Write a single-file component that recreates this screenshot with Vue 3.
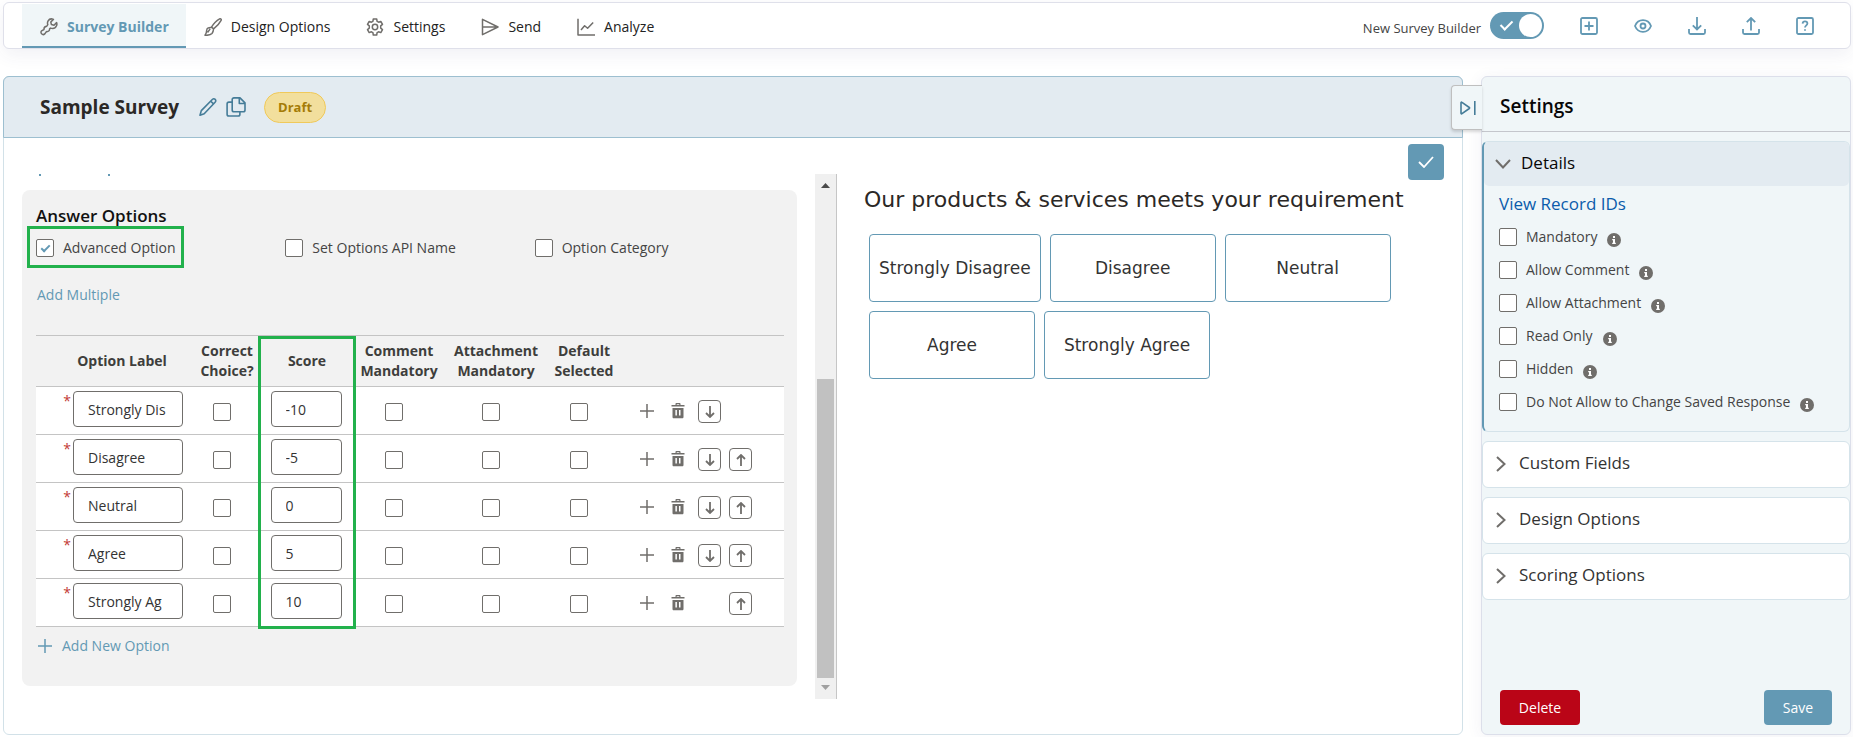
<script setup>
import { reactive, ref } from 'vue'

const tabs = ['Survey Builder', 'Design Options', 'Settings', 'Send', 'Analyze']
const tools = ['Add', 'Preview', 'Download', 'Upload', 'Help']
const newBuilder = ref(true)

const flags = reactive([
  { id: 'advanced', label: 'Advanced Option', on: true },
  { id: 'api-name', label: 'Set Options API Name', on: false },
  { id: 'category', label: 'Option Category', on: false },
])

const options = reactive([
  { label: 'Strongly Dis', score: '-10' },
  { label: 'Disagree', score: '-5' },
  { label: 'Neutral', score: '0' },
  { label: 'Agree', score: '5' },
  { label: 'Strongly Ag', score: '10' },
])

const choices = ['Strongly Disagree', 'Disagree', 'Neutral', 'Agree', 'Strongly Agree']
const details = ['Mandatory', 'Allow Comment', 'Allow Attachment', 'Read Only', 'Hidden', 'Do Not Allow to Change Saved Response']
const sections = ['Custom Fields', 'Design Options', 'Scoring Options']
</script>

<template>
  <div class="page">
    <header class="topbar">
      <nav class="tabs">
        <a v-for="(t, i) in tabs" :key="t" href="#" class="tab" :class="{ active: i === 0 }">
          <svg v-if="i === 0" class="ico" viewBox="0 0 18 18"><path d="M16.6 4.6 14 7.2l-2.6-.6-.6-2.6 2.6-2.6c-2-.9-4.3-.2-5.300 1.500-.7 1.200-.8 2.500-.3 3.800L6.800 8.200c-2 .2-3 1.200-2.800 3.300L1.600 12.800a2.100 2.100 0 0 0 0 3 2.300 2.300 0 0 0 3.200.1l1.600-2.300c2 .2 3.200-.8 3.200-2.700l.9-.8c2.500.9 5-.200 6-2.300.5-1 .5-2.200.1-3.200Z" /></svg>
          <svg v-else-if="i === 1" class="ico" viewBox="0 0 18 18"><path d="M7.500 9.200C9.800 5.300 12.600 2.500 15.600.900c1-.5 2 .4 1.500 1.500-1.500 3-4 5.800-7.500 8.400M7.500 9.200l2.100 1.600M7.500 9.200 4.200 9.900c-1 .4-1.400 1.200-1.500 2.300-.1 2-.6 3.600-1.700 5 2.500.2 5.600-.1 7-1.600 1-1.200 1.400-2.700 1.600-4.800M6.200 10.900l-2.700 3.600" /></svg>
          <svg v-else-if="i === 2" class="ico" viewBox="0 0 18 18"><path d="m7.300 1-.4 2.300-1.500.9-2.200-.8-1.700 3 1.800 1.500v2.200l-1.800 1.500 1.700 3 2.200-.8 1.500.9.400 2.300h3.400l.4-2.300 1.500-.9 2.200.8 1.700-3-1.800-1.500V7.900l1.800-1.500-1.700-3-2.200.8-1.500-.9-.4-2.300Z" /><circle cx="9" cy="9" r="2.700" /></svg>
          <svg v-else-if="i === 3" class="ico" viewBox="0 0 18 18"><path d="M1.500 1.300 17 9 1.500 16.700V1.300ZM1.500 9H16.500" /></svg>
          <svg v-else class="ico" viewBox="0 0 18 18"><path d="M1 .800v16.200h17M4 12l3.600-4.300 3 2.600 5.600-5.800" /></svg>
          <span>{{ t }}</span>
        </a>
      </nav>
      <div class="tools">
        <label class="switch">
          <span>New Survey Builder</span>
          <input v-model="newBuilder" type="checkbox" role="switch" />
        </label>
        <button v-for="(t, i) in tools" :key="t" type="button" class="tool" :aria-label="t">
          <svg v-if="i === 0" viewBox="0 0 18 18"><rect x="1" y="1" width="16" height="16" rx="1.500" /><path d="M9 4.500v9M4.500 9h9" /></svg>
          <svg v-else-if="i === 1" viewBox="0 0 18 18"><path d="M1 9c1.500-3.800 4.500-5.800 8-5.800S15.500 5.200 17 9c-1.500 3.800-4.500 5.800-8 5.800S2.500 12.800 1 9Z" /><circle cx="9" cy="9" r="2.500" /></svg>
          <svg v-else-if="i === 2" viewBox="0 0 18 18"><path d="M9 0v12.500M4.800 8.300 9 12.500l4.200-4.200M1 12v3.500c0 .8.700 1.500 1.500 1.500h13c.8 0 1.500-.7 1.500-1.500V12" /></svg>
          <svg v-else-if="i === 3" viewBox="0 0 18 18"><path d="M9 13.500V1M4.800 5.200 9 1l4.200 4.200M1 12v3.500c0 .8.700 1.500 1.500 1.500h13c.8 0 1.500-.7 1.500-1.500V12" /></svg>
          <svg v-else viewBox="0 0 18 18"><rect x="1" y="1" width="16" height="16" rx="1.500" /><path d="M6.600 6.600c.1-1.400 1.100-2.200 2.400-2.200s2.400.9 2.400 2.200c0 1.700-2.400 1.900-2.400 4M9 12.300v1.500" /></svg>
        </button>
      </div>
    </header>

    <div class="columns">
      <main class="main">
        <div class="survey-head">
          <h1>Sample Survey</h1>
          <button type="button" class="plain" aria-label="Rename survey">
            <svg class="ico-head" viewBox="0 0 20 20"><path d="M2 18.200 3.300 13.600 14.300 2.500c.9-.9 2.100-.9 2.900-.1s.8 2-.1 2.900L6.200 16.700ZM12.800 4.200l2.700 2.700" /></svg>
          </button>
          <button type="button" class="plain" aria-label="Copy survey">
            <svg class="ico-head" viewBox="0 0 20 20"><path d="M8 .900h6l5 5v7c0 1-.8 1.800-1.800 1.800H8c-1 0-1.800-.8-1.800-1.800V2.700C6.200 1.700 7 .900 8 .900ZM13.300 1v5.500H19M6 5.100H2.900c-1 0-1.800.8-1.800 1.800v10.300c0 1 .8 1.800 1.800 1.800h9.200c1 0 1.800-.8 1.800-1.800v-2.400" /></svg>
          </button>
          <span class="badge">Draft</span>
        </div>

        <div class="body">
          <div class="editor">
            <div class="scroll-content">
              <div class="ticks" aria-hidden="true"><i></i><i></i></div>
              <section class="card">
                <h2>Answer Options</h2>
                <div class="flags">
                  <div v-for="(f, i) in flags" :key="f.id" class="flag">
                    <label class="check" :class="{ marked: i === 0 }">
                      <input v-model="f.on" type="checkbox" class="box" />
                      <span>{{ f.label }}</span>
                    </label>
                  </div>
                </div>
                <a href="#" class="add-multiple">Add Multiple</a>

                <div class="table-wrap">
                  <table>
                    <colgroup>
                      <col class="c-label" /><col class="c-correct" /><col class="c-score" /><col class="c-comment" /><col class="c-attach" /><col class="c-default" /><col />
                    </colgroup>
                    <thead>
                      <tr>
                        <th class="first">Option Label</th>
                        <th>Correct<br />Choice?</th>
                        <th>Score</th>
                        <th>Comment<br />Mandatory</th>
                        <th>Attachment<br />Mandatory</th>
                        <th>Default<br />Selected</th>
                        <th></th>
                      </tr>
                    </thead>
                    <tbody>
                      <tr v-for="(o, i) in options" :key="i">
                        <td>
                          <div class="label-cell">
                            <span class="star">*</span>
                            <input v-model="o.label" type="text" class="field" aria-label="Option Label" />
                          </div>
                        </td>
                        <td class="tick"><input type="checkbox" class="box" aria-label="Correct Choice?" /></td>
                        <td><div class="score-cell"><input v-model="o.score" type="text" class="field" aria-label="Score" /></div></td>
                        <td class="tick"><input type="checkbox" class="box" aria-label="Comment Mandatory" /></td>
                        <td class="tick"><input type="checkbox" class="box" aria-label="Attachment Mandatory" /></td>
                        <td class="tick"><input type="checkbox" class="box" aria-label="Default Selected" /></td>
                        <td>
                          <div class="actions">
                            <button type="button" class="act" aria-label="Add option"><svg viewBox="0 0 14 14"><path d="M7 0v14M0 7h14" fill="none" stroke="currentColor" stroke-width="1.500" /></svg></button>
                            <button type="button" class="act" aria-label="Delete option"><svg viewBox="0 0 14 16"><path fill="currentColor" fill-rule="evenodd" d="M4.500 2V1c0-.6.400-1 1-1h3c.6 0 1 .4 1 1v1h4v1.600H.500V2ZM5.700 2h2.600v-.8H5.700ZM1.500 5h11v9c0 .8-.5 1.300-1.300 1.300H2.800c-.8 0-1.300-.5-1.300-1.300Zm2.900 2v5.500h1.500V7Zm3.600 0v5.500h1.500V7Z" /></svg></button>
                            <button type="button" class="move" :class="{ gone: i === options.length - 1 }" aria-label="Move down"><svg viewBox="0 0 10 12"><path d="M5 0v11M1 7l4 4 4-4" /></svg></button>
                            <button type="button" class="move" :class="{ gone: i === 0 }" aria-label="Move up"><svg viewBox="0 0 10 12"><path d="M5 12V1M1 5l4-4 4 4" /></svg></button>
                          </div>
                        </td>
                      </tr>
                    </tbody>
                  </table>
                  <div class="score-mark" aria-hidden="true"></div>
                </div>

                <a href="#" class="add-new">
                  <svg viewBox="0 0 14 14"><path d="M7 0v14M0 7h14" /></svg>
                  <span>Add New Option</span>
                </a>
              </section>
            </div>
            <div class="scrollbar" aria-hidden="true">
              <svg class="arrow up" viewBox="0 0 9 5"><path d="M4.500 0 9 5H0Z" /></svg>
              <div class="track"><div class="thumb"></div></div>
              <svg class="arrow down" viewBox="0 0 9 5"><path d="M0 0h9L4.500 5Z" /></svg>
            </div>
          </div>

          <div class="preview">
            <button type="button" class="confirm" aria-label="Confirm">
              <svg viewBox="0 0 16 12"><path d="m1 6 5 5L15 1" /></svg>
            </button>
            <h2>Our products &amp; services meets your requirement</h2>
            <div class="choices">
              <button v-for="c in choices" :key="c" type="button">{{ c }}</button>
            </div>
          </div>
        </div>
      </main>

      <aside class="side">
        <button type="button" class="collapse" aria-label="Collapse settings">
          <svg viewBox="0 0 16 14"><path d="M1 1.800v10.400c0 .5.600.8 1 .5l7.300-5.200c.4-.3.4-.7 0-1L2 1.300c-.4-.3-1 0-1 .5ZM14.800 0v14" /></svg>
        </button>
        <h2>Settings</h2>
        <section class="details">
          <button type="button" class="details-head">
            <svg viewBox="0 0 16 10"><path d="m1 1 7 7.500L15 1" /></svg>
            <span>Details</span>
          </button>
          <div class="details-body">
            <a href="#">View Record IDs</a>
            <div v-for="d in details" :key="d" class="detail">
              <label class="check"><input type="checkbox" class="box" /><span>{{ d }}</span></label>
              <svg class="info" viewBox="0 0 14 14"><circle cx="7" cy="7" r="7" /><path d="M6 3h2v2H6ZM5.200 6H8v3.700h.8v1.200H5.200V9.700H6V7.200h-.8Z" /></svg>
            </div>
          </div>
        </section>
        <button v-for="s in sections" :key="s" type="button" class="section">
          <svg viewBox="0 0 10 16"><path d="m1 1 7.500 7L1 15" /></svg>
          <span>{{ s }}</span>
        </button>
        <div class="footer">
          <button type="button" class="delete">Delete</button>
          <button type="button" class="save">Save</button>
        </div>
      </aside>
    </div>
  </div>
</template>

<style>
body {
  margin: 0;
  background: #fff;
}
</style>

<style scoped>
.page {
  box-sizing: border-box;
  min-height: 100vh;
  padding: 2px 2px 2px 3px;
  display: flex;
  flex-direction: column;
  gap: 27px;
  font-family: "Open Sans", "Noto Sans", sans-serif;
  font-size: 14px;
  line-height: 20px;
  color: #222;
}
.page *,
.page *::before,
.page *::after {
  box-sizing: border-box;
}
button,
input {
  font: inherit;
  color: inherit;
  margin: 0;
}
button {
  padding: 0;
  border: 0;
  background: none;
  cursor: pointer;
}
a {
  color: #6399b4;
  text-decoration: none;
}
h1,
h2 {
  margin: 0;
}
svg {
  display: block;
  flex: none;
}

/* Top bar */
.topbar {
  display: flex;
  justify-content: space-between;
  height: 47px;
  padding-left: 18px;
  padding-right: 36px;
  border: 1px solid #dfe0ea;
  border-radius: 6px;
  background: #fff;
  box-shadow: 0 6px 18px rgba(60, 60, 110, 0.07);
}
.tabs {
  display: flex;
  padding-top: 1px;
}
.tab {
  display: flex;
  align-items: center;
  gap: 9px;
  height: 44px;
  padding: 3px 18px 0;
  color: #222;
  border-bottom: 2px solid transparent;
}
.tab.active {
  padding-right: 17px;
  color: #6399b4;
  font-weight: 700;
  background: #f0f6f8;
  border-color: #6399b4;
}
.ico {
  width: 18px;
  height: 18px;
  fill: none;
  stroke: #706e6b;
  stroke-width: 1.5;
  stroke-linejoin: round;
}
.tools {
  display: flex;
  align-items: center;
  gap: 36px;
}
.switch {
  display: flex;
  align-items: center;
  gap: 9px;
  color: #444;
  font-size: 13px;
}
.switch span {
  padding-top: 4px;
}
.switch input {
  appearance: none;
  position: relative;
  width: 54px;
  height: 27px;
  border-radius: 14px;
  background: #6399b4;
}
.switch input::before {
  content: "";
  position: absolute;
  right: 2px;
  top: 2px;
  width: 23px;
  height: 23px;
  border-radius: 50%;
  background: #fff;
}
.switch input::after {
  content: "";
  position: absolute;
  left: 13px;
  top: 6px;
  width: 7px;
  height: 12px;
  border: solid #fff;
  border-width: 0 2px 2px 0;
  transform: rotate(45deg);
}
.tool svg {
  width: 18px;
  height: 18px;
  fill: none;
  stroke: #6399b4;
  stroke-width: 1.8;
}

/* Columns */
.columns {
  flex: 1;
  display: grid;
  grid-template-columns: minmax(0, 1fr) 370px;
  gap: 18px;
}
.main {
  display: flex;
  flex-direction: column;
  border: 1px solid #d2e1e8;
  border-radius: 6px;
}
.survey-head {
  display: flex;
  align-items: center;
  height: 62px;
  margin: -1px -1px 0;
  padding-left: 36px;
  background: #e3ebf1;
  border: 1px solid #9dbfd0;
  border-radius: 6px 6px 0 0;
}
.survey-head h1 {
  font-size: 19px;
  font-weight: 700;
  line-height: 28px;
  margin-right: 19px;
  color: #2b2826;
}
.plain {
  margin-right: 8px;
}
.ico-head {
  width: 20px;
  height: 20px;
  fill: none;
  stroke: #457c98;
  stroke-width: 1.6;
  stroke-linejoin: round;
}
.badge {
  margin-left: 10px;
  padding: 4px 13px 5px;
  border: 1px solid #f0c95a;
  border-radius: 16px;
  background: #f2df9d;
  color: #a57c07;
  font-size: 13px;
  font-weight: 700;
}
.body {
  flex: 1;
  display: grid;
  grid-template-columns: 833fr 625fr;
  align-items: start;
}

/* Editor */
.editor {
  display: flex;
  margin-top: 36px;
  padding-left: 18px;
  border-right: 1px solid #c6c6c6;
}
.scroll-content {
  flex: 1;
  padding-bottom: 13px;
  margin-right: 18px;
}
.ticks {
  display: flex;
  gap: 67px;
  height: 16px;
  padding-left: 17px;
}
.ticks i {
  width: 2px;
  height: 2px;
  background: #6399b4;
}
.card {
  padding: 14px 13px 28px 14px;
  border-radius: 8px;
  background: #f2f2f2;
}
.card h2 {
  font-size: 17px;
  font-weight: 600;
  line-height: 24px;
  color: #111;
}
.flags {
  display: grid;
  grid-template-columns: repeat(3, 1fr);
  margin-top: 10px;
}
.check {
  position: relative;
  display: inline-flex;
  align-items: center;
  gap: 9px;
  color: #444;
}
.marked::after {
  content: "";
  position: absolute;
  inset: -12px -8px -10px -9px;
  border: 3px solid #22b14c;
}
.box {
  appearance: none;
  position: relative;
  flex: none;
  width: 18px;
  height: 18px;
  border: 1px solid #706e6b;
  border-radius: 2px;
  background: #fff;
}
.box:checked::after {
  content: "";
  position: absolute;
  left: 6px;
  top: 3px;
  width: 5px;
  height: 9px;
  border: solid #6399b4;
  border-width: 0 2px 2px 0;
  transform: rotate(45deg);
}
.add-multiple {
  display: block;
  width: max-content;
  margin: 21px 0 28px;
  padding-left: 1px;
  line-height: 24px;
}
.table-wrap {
  position: relative;
}
table {
  width: 100%;
  table-layout: fixed;
  border-collapse: separate;
  border-spacing: 0;
  border-top: 1px solid #c4c4c4;
}
.c-label {
  width: 162px;
}
.c-correct {
  width: 58px;
}
.c-score {
  width: 102px;
}
.c-comment {
  width: 82px;
}
.c-attach {
  width: 112px;
}
.c-default {
  width: 64px;
}
th {
  height: 51px;
  padding: 0;
  font-weight: 700;
  color: #3e3e3c;
  border-bottom: 1px solid #c4c4c4;
  white-space: nowrap;
}
th.first {
  padding-left: 10px;
}
td {
  height: 48px;
  padding: 0;
  background: #fff;
  border-bottom: 1px solid #c4c4c4;
}
.label-cell {
  display: flex;
  width: 147px;
  padding-bottom: 3px;
}
.star {
  width: 37px;
  padding-right: 2px;
  text-align: right;
  color: #c23934;
}
.field {
  width: 110px;
  height: 36px;
  padding: 0 14px;
  border: 1px solid #706e6b;
  border-radius: 4px;
  background: #fff;
  color: #333;
}
.score-cell {
  display: flex;
  justify-content: center;
  padding: 0 2px 3px 0;
}
.score-cell .field {
  width: 71px;
}
.tick {
  text-align: center;
  padding: 1px 10px 0 0;
}
.tick .box {
  display: inline-block;
  vertical-align: middle;
}
.actions {
  display: flex;
  align-items: center;
  padding-left: 24px;
  padding-top: 1px;
}
.act {
  width: 14px;
  margin-right: 17px;
  color: #706e6b;
}
.move {
  display: flex;
  align-items: center;
  justify-content: center;
  width: 23px;
  height: 23px;
  margin: 0 8px 0 -4px;
  padding-top: 2px;
  border: 1px solid #706e6b;
  border-radius: 4px;
}
.move + .move {
  margin-left: 0;
}
.move svg {
  width: 10px;
  height: 12px;
  fill: none;
  stroke: #706e6b;
  stroke-width: 1.8;
}
.gone {
  visibility: hidden;
}
.score-mark {
  position: absolute;
  left: 222px;
  top: 1px;
  bottom: -2px;
  width: 98px;
  border: 3px solid #22b14c;
}
.add-new {
  display: flex;
  align-items: center;
  gap: 10px;
  width: max-content;
  margin-top: 7px;
  padding-left: 2px;
  line-height: 24px;
}
.add-new svg {
  width: 14px;
  height: 14px;
  stroke: #6399b4;
  stroke-width: 1.5;
}
.scrollbar {
  width: 21px;
  display: flex;
  flex-direction: column;
  align-items: center;
  background: #f0f0f0;
}
.arrow {
  width: 9px;
  height: 5px;
  margin: 9px 0 7px;
  fill: #4a4a4a;
}
.arrow.down {
  margin: 7px 0 9px;
  fill: #a0a0a0;
}
.track {
  flex: 1;
  width: 17px;
  display: flex;
  align-items: flex-end;
}
.thumb {
  width: 100%;
  height: 62%;
  background: #c1c1c1;
}

/* Preview */
.preview {
  display: flex;
  flex-direction: column;
  padding: 6px 18px 0 27px;
  font-family: "DejaVu Sans", Verdana, sans-serif;
}
.confirm {
  display: flex;
  align-items: center;
  justify-content: center;
  align-self: flex-end;
  width: 36px;
  height: 36px;
  border-radius: 4px;
  background: #6399b4;
}
.confirm svg {
  width: 16px;
  height: 12px;
  fill: none;
  stroke: #fff;
  stroke-width: 1.8;
}
.preview h2 {
  margin-top: 6px;
  font-size: 22px;
  font-weight: 400;
  line-height: 28px;
  color: #2b2826;
}
.choices {
  display: flex;
  flex-wrap: wrap;
  gap: 9px;
  margin: 20px 40px 0 5px;
}
.choices button {
  min-width: 166px;
  height: 68px;
  padding: 0 9px;
  border: 1px solid #6399b4;
  border-radius: 4px;
  background: #fff;
  font-size: 17px;
  color: #333;
}

/* Settings panel */
.side {
  position: relative;
  display: flex;
  flex-direction: column;
  border: 1px solid #dcdfea;
  border-radius: 6px;
  background: #f0f6f8;
  box-shadow: 0 2px 16px rgba(60, 60, 110, 0.07);
}
.collapse {
  position: absolute;
  left: -31px;
  top: 8px;
  width: 31px;
  height: 45px;
  padding-left: 8px;
  border: 1px solid #bfbfbf;
  border-right: 0;
  border-radius: 4px 0 0 4px;
  background: #f0f6f8;
  box-shadow: 0 2px 3px rgba(0, 0, 0, 0.15);
}
.collapse svg {
  width: 16px;
  height: 14px;
  fill: none;
  stroke: #457c98;
  stroke-width: 1.6;
}
.side h2 {
  height: 55px;
  padding: 15px 0 0 18px;
  border-bottom: 1px solid #c4c6cc;
  font-size: 19px;
  font-weight: 600;
  line-height: 28px;
  color: #080707;
}
.details {
  margin-top: 9px;
  padding-bottom: 19px;
  border: 1px solid #d5e3ea;
  border-left: 2px solid #6399b4;
  border-radius: 6px;
}
.details-head {
  display: flex;
  align-items: center;
  gap: 10px;
  width: 100%;
  height: 44px;
  padding: 0 0 3px 11px;
  border-radius: 5px;
  background: #e3ebf1;
  font-size: 17px;
  color: #080707;
}
.details-head svg {
  width: 16px;
  height: 10px;
  margin-top: 3px;
}
.details-head svg,
.section svg {
  fill: none;
  stroke: #706e6b;
  stroke-width: 2;
}
.details-body {
  display: flex;
  flex-direction: column;
  gap: 13px;
  padding: 6px 0 0 15px;
}
.details-body a {
  width: max-content;
  font-size: 17px;
  line-height: 24px;
  margin-bottom: -2px;
  color: #0b5cab;
}
.detail {
  display: flex;
  align-items: center;
  gap: 10px;
}
.info {
  width: 14px;
  height: 14px;
  margin-top: 6px;
}
.info circle {
  fill: #706e6b;
}
.info path {
  fill: #fff;
}
.section {
  display: flex;
  align-items: center;
  gap: 13px;
  height: 47px;
  margin-top: 9px;
  padding: 0 0 3px 13px;
  border: 1px solid #d5e3ea;
  border-radius: 6px;
  background: #fff;
  font-size: 17px;
  color: #333;
}
.section svg {
  width: 10px;
  height: 16px;
  margin-top: 2px;
}
.footer {
  display: flex;
  justify-content: space-between;
  margin-top: auto;
  padding: 12px 18px 9px;
}
.footer button {
  height: 35px;
  border-radius: 4px;
  color: #fff;
}
.delete {
  width: 80px;
  background: #ba0517;
}
.save {
  width: 68px;
  background: #6399b4;
}
</style>
